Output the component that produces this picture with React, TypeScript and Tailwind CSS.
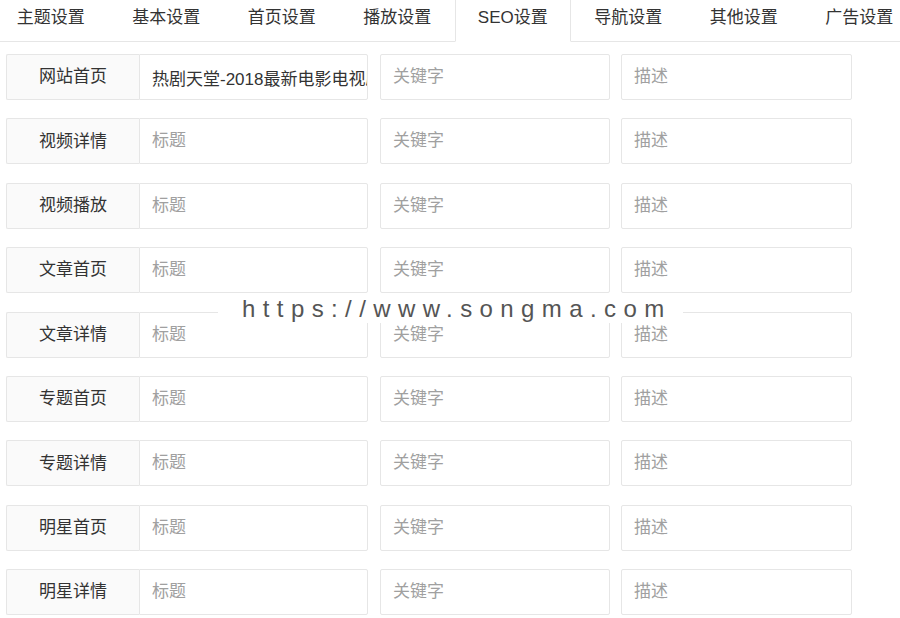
import React from 'react';

const tabs = ['主题设置', '基本设置', '首页设置', '播放设置', 'SEO设置', '导航设置', '其他设置', '广告设置'];

const rows = [
  { label: '网站首页', title: '热剧天堂-2018最新电影电视剧在线观看' },
  { label: '视频详情' },
  { label: '视频播放' },
  { label: '文章首页' },
  { label: '文章详情' },
  { label: '专题首页' },
  { label: '专题详情' },
  { label: '明星首页' },
  { label: '明星详情' },
];

const font = { fontFamily: '"Liberation Sans", "Noto Sans CJK SC", sans-serif' };

export default function App() {
  return (
    <div className="relative w-[900px] h-[618px] overflow-hidden bg-white text-[#333]" style={font}>
      {/* tabs */}
      <div className="h-[42px] overflow-hidden">
        <ul className="flex -ml-[7px] h-[42px]">
          {tabs.map((t) => (
            <li
              key={t}
              className={
                'shrink-0 w-[115.5px] h-[42px] pb-[6px] flex items-center justify-center text-[17px] whitespace-nowrap border-b ' +
                (t === 'SEO设置' ? 'bg-white border-x border-[#e6e6e6] border-b-white' : 'border-[#e6e6e6]')
              }
            >
              {t}
            </li>
          ))}
        </ul>
      </div>

      {/* form */}
      <div className="flex flex-col gap-[18.4px] pt-[12px] pl-[6px]">
        {rows.map((r) => (
          <div key={r.label} className="flex items-center h-[46px]">
            <label className="w-[133px] h-full flex items-center justify-center bg-[#fafafa] border border-[#e6e6e6] border-r-0 rounded-l-[2px] text-[17px] shrink-0">
              {r.label}
            </label>
            <input
              className="w-[229px] h-full border border-[#e6e6e6] rounded-r-[2px] pl-[12px] pr-0 text-[17px] text-[#333] placeholder-[#a0a0a0] outline-none"
              placeholder="标题"
              defaultValue={r.title}
              style={font}
            />
            <input
              className="ml-[12px] w-[230px] h-full border border-[#e6e6e6] rounded-[2px] pl-[12px] text-[17px] placeholder-[#a0a0a0] outline-none"
              placeholder="关键字"
              style={font}
            />
            <input
              className="ml-[11px] w-[231px] h-full border border-[#e6e6e6] rounded-[2px] pl-[12px] text-[17px] placeholder-[#a0a0a0] outline-none"
              placeholder="描述"
              style={font}
            />
          </div>
        ))}
      </div>

      {/* watermark */}
      <div className="absolute left-[218px] top-[294px] w-[465px] h-[29px] bg-white flex items-center pl-[24px] overflow-hidden">
        <span className="text-[24px] leading-none tracking-[7.4px] text-[#555] whitespace-nowrap">
          https://www.songma.com
        </span>
      </div>
    </div>
  );
}
